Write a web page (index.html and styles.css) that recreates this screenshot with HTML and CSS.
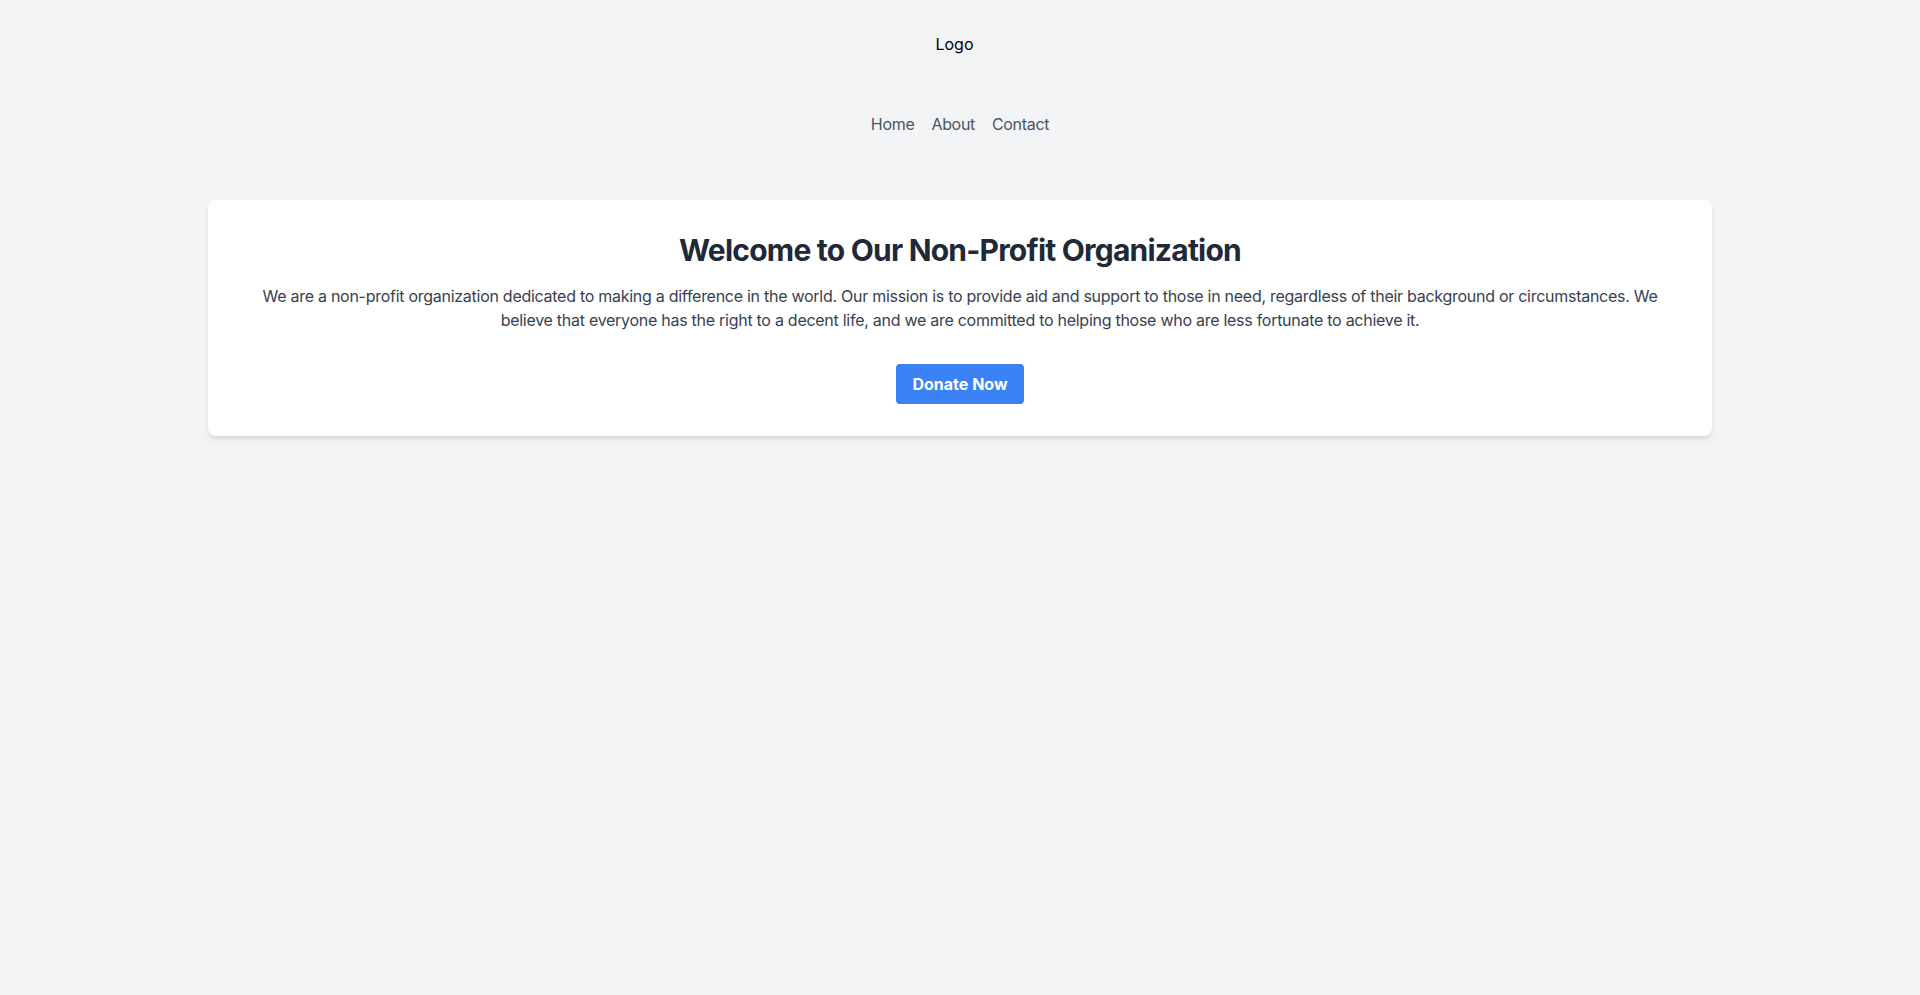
FILE: index.html
```html
<!DOCTYPE html>
<html lang="en">
<head>
<meta charset="utf-8">
<title>Non-Profit Organization</title>
<link rel="stylesheet" href="styles.css">
</head>
<body>
<header class="site-header">
  <div class="logo-row"><span class="logo">Logo</span></div>
  <nav class="nav">
    <a href="#" class="nav-link">Home</a>
    <a href="#" class="nav-link">About</a>
    <a href="#" class="nav-link">Contact</a>
  </nav>
</header>
<main class="container">
  <section class="card">
    <h1 class="title">Welcome to Our Non-Profit Organization</h1>
    <p class="lead">We are a non-profit organization dedicated to making a difference in the world. Our mission is to provide aid and support to those in need, regardless of their background or circumstances. We believe that everyone has the right to a decent life, and we are committed to helping those who are less fortunate to achieve it.</p>
    <div class="actions"><button class="btn">Donate Now</button></div>
  </section>
</main>
</body>
</html>
```

FILE: styles.css
```css
* { box-sizing: border-box; }
html, body { margin: 0; padding: 0; }
body {
  background: #f3f4f6;
  font-family: Inter, "Noto Sans", sans-serif;
  font-size: 16px;
  line-height: 24px;
  color: #000;
  min-height: 995px;
}
.site-header {
  padding-top: 32px;
  text-align: center;
}
.logo-row {
  display: flex;
  justify-content: center;
}
.logo {
  display: inline-block;
  margin-right: 11px;
  color: #000;
}
.nav {
  margin-top: 56px;
  display: flex;
  justify-content: center;
  gap: 17px;
  letter-spacing: -0.02em;
}
.nav-link {
  color: #4b5563;
  text-decoration: none;
}
.container {
  max-width: 1536px;
  margin: 64px auto 0;
  padding: 0 16px;
}
.card {
  background: #fff;
  border-radius: 8px;
  box-shadow: 0 4px 6px -1px rgba(0,0,0,0.1), 0 2px 4px -2px rgba(0,0,0,0.1);
  padding: 32px;
  text-align: center;
}
.title {
  margin: 0 0 16px;
  font-size: 30px;
  line-height: 36px;
  font-weight: 700;
  color: #1f2937;
  letter-spacing: -0.026em;
}
.lead {
  margin: 0 0 32px;
  color: #374151;
  letter-spacing: -0.017em;
}
.actions {
  display: flex;
  justify-content: center;
}
.btn {
  font-family: inherit;
  font-size: 16px;
  line-height: 24px;
  font-weight: 700;
  color: #fff;
  background: #3b82f6;
  border: 0;
  border-radius: 4px;
  padding: 8px 16px;
  cursor: pointer;
}
```
